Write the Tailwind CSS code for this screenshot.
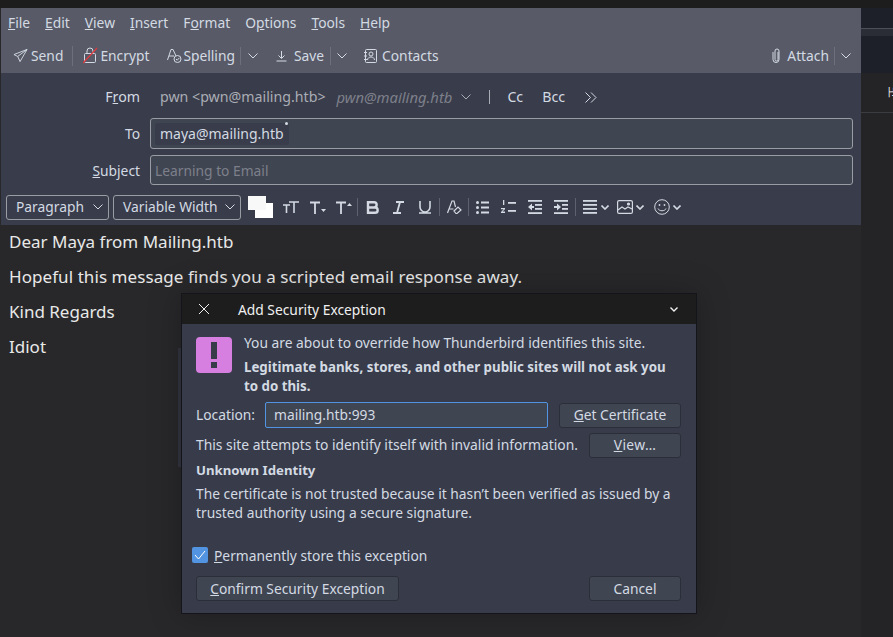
<!DOCTYPE html>
<html lang="en">
<head>
    <meta charset="UTF-8">
    <title>Write: Learning to Email</title>
    <script src="https://cdn.jsdelivr.net/npm/@tailwindcss/browser@4"></script>
</head>
<body class="w-[893px] h-[637px] overflow-hidden bg-[#28282b] font-['Noto_Sans',sans-serif] text-[13.8px] text-[#d3dae3]">
<div class="relative w-[893px] h-[637px] flex flex-col">
    <div class="h-[8px] bg-[#1d1d1d] w-full shrink-0"></div>
    <div class="flex flex-1 min-h-0">
        <!-- compose window -->
        <div class="w-[861px] pl-[1px] flex flex-col">
            <!-- menu -->
            <div class="h-[32px] bg-[#585b67] flex items-center pl-[7px] gap-[15px] text-[#d3dae3] pb-[2px]">
                <span><u>F</u>ile</span><span><u>E</u>dit</span><span><u>V</u>iew</span><span><u>I</u>nsert</span><span>F<u>o</u>rmat</span><span>O<u>p</u>tions</span><span><u>T</u>ools</span><span><u>H</u>elp</span>
            </div>
            <!-- toolbar -->
            <div class="h-[33px] bg-[#585b67] flex items-center pl-[12px] pr-[10px]">
                <svg class="w-[15px] h-[15px] mb-[2px]" viewBox="0 0 16 16" fill="none" stroke="#d3dae3" stroke-width="1"><path d="M15 1.500 1 7l4 2 2.500 5.500L15 1.500ZM5 9l10-7.500"/></svg>
                <span class="ml-[3px]">Send</span>
                <span class="w-px h-[20px] bg-[#6d707b] ml-[9px] mb-[2px]"></span>
                <svg class="w-[15px] h-[17px] ml-[10px] mb-[2px]" viewBox="0 0 15 17" fill="none" stroke="#d3dae3"><rect x="1.500" y="6.500" width="11" height="9" rx="1"/><path d="M4 6.500V4a3 3 0 0 1 6 0v2"/><path d="M0 16 14 1" stroke="#e0393e" stroke-width="1.200"/></svg>
                <span class="ml-[2px]">Encrypt</span>
                <svg class="w-[15px] h-[15px] ml-[18px] mb-[2px]" viewBox="0 0 15 15" fill="none" stroke="#d3dae3"><path d="M.5 12 4 1.500h2L9 8M2 8h5"/><circle cx="10.500" cy="11" r="3.500"/><path d="m9 11 1.200 1.200L12.500 9.800"/></svg>
                <span class="ml-[1px]">Spelling</span>
                <span class="w-px h-[18px] bg-[#6d707b] ml-[5px] mb-[2px]"></span>
                <svg class="w-[10px] h-[6px] ml-[7px] mb-[2px]" viewBox="0 0 10 6" fill="none" stroke="#d3dae3"><path d="m.5.500 4.500 4.500L9.500.500"/></svg>
                <svg class="w-[11px] h-[12px] ml-[18px] mb-[2px]" viewBox="0 0 11 12" fill="none" stroke="#d3dae3"><path d="M5.500 1v7M2.500 5.500l3 3 3-3M.5 11h10"/></svg>
                <span class="ml-[7px]">Save</span>
                <span class="w-px h-[18px] bg-[#6d707b] ml-[6px] mb-[2px]"></span>
                <svg class="w-[10px] h-[6px] ml-[6px] mb-[2px]" viewBox="0 0 10 6" fill="none" stroke="#d3dae3"><path d="m.5.500 4.500 4.500L9.500.500"/></svg>
                <svg class="w-[13px] h-[14px] ml-[17px] mb-[2px]" viewBox="0 0 13 14" fill="none" stroke="#d3dae3"><rect x="1.500" y=".5" width="11" height="13" rx="1"/><circle cx="7" cy="5" r="2"/><path d="M3.500 11c0-4 7-4 7 0M0 3.500h3M0 7h3M0 10.500h3"/></svg>
                <span class="ml-[5px]">Contacts</span>
                <svg class="w-[9px] h-[15px] ml-auto mb-[2px]" viewBox="0 0 9 15" fill="none" stroke="#d3dae3"><path d="M6 4v7.500a1.500 1.500 0 0 1-3 0V3a2 2 0 0 1 4 0v8.500a3 3 0 0 1-6 0V4"/></svg>
                <span class="ml-[6px]">Attach</span>
                <span class="w-px h-[18px] bg-[#6d707b] ml-[5px] mb-[2px]"></span>
                <svg class="w-[10px] h-[6px] ml-[6px] mb-[2px]" viewBox="0 0 10 6" fill="none" stroke="#d3dae3"><path d="m.5.500 4.500 4.500L9.500.500"/></svg>
            </div>
            <!-- header fields -->
            <div class="h-[152px] bg-[#393c4a] flex flex-col">
                <div class="h-[45px] flex items-center pt-[3px] text-[14.2px]">
                    <span class="w-[139px] text-right">F<u>r</u>om</span>
                    <span class="ml-[20px] text-[#a9adb5]">pwn &lt;pwn@mailing.htb&gt;</span>
                    <span class="ml-[11px] italic text-[#7d808a] text-[14.8px]">pwn@mailing.htb</span>
                    <svg class="w-[10px] h-[6px] ml-[9px]" viewBox="0 0 10 6" fill="none" stroke="#a9adb5"><path d="m.5.500 4.500 4.500L9.500.500"/></svg>
                    <span class="w-px h-[14px] bg-[#a9adb5] ml-[18px]"></span>
                    <span class="ml-[17px]">Cc</span>
                    <span class="ml-[19px]">Bcc</span>
                    <svg class="w-[12px] h-[11px] ml-[20px]" viewBox="0 0 12 11" fill="none" stroke="#d3dae3"><path d="m.5.500 5 5-5 5M6 .5l5 5-5 5"/></svg>
                </div>
                <div class="flex items-center h-[31px]">
                    <span class="w-[139px] text-right pt-[1px]">To</span>
                    <div class="ml-[10px] w-[703px] h-[31px] border border-[#9a9ca3] rounded-[3px] bg-[#404552] flex items-center pl-[4px] text-[14px]">
                        <span class="relative h-[22px] leading-[21px] px-[5px] rounded-[3px] bg-[#393c4a]">maya@mailing.htb<span class="absolute right-[1px] top-[-1px] w-[3px] h-[3px] rounded-full bg-[#d3dae3]"></span></span>
                    </div>
                </div>
                <div class="flex items-center h-[30px] mt-[6px]">
                    <span class="w-[139px] text-right pt-[2px]"><u>S</u>ubject</span>
                    <div class="ml-[10px] w-[703px] h-[30px] border border-[#9a9ca3] rounded-[3px] bg-[#404552] flex items-center pl-[4px] pt-[2px] text-[#7d808a]">Learning to Email</div>
                </div>
                <!-- format bar -->
                <div class="flex items-center h-[26px] mt-[9px] pl-[5px]">
                    <div class="w-[103px] h-[25px] border border-[#9a9ca3] rounded-[3px] flex items-center pl-[9px]">Paragraph<svg class="w-[10px] h-[6px] ml-auto mr-[5px]" viewBox="0 0 10 6" fill="none" stroke="#d3dae3"><path d="m.5.500 4.500 4.500L9.500.500"/></svg></div>
                    <div class="w-[128px] h-[25px] border border-[#9a9ca3] rounded-[3px] flex items-center pl-[9px] ml-[4px]">Variable Width<svg class="w-[10px] h-[6px] ml-auto mr-[5px]" viewBox="0 0 10 6" fill="none" stroke="#d3dae3"><path d="m.5.500 4.500 4.500L9.500.500"/></svg></div>
                    <div class="relative w-[25px] h-[22px] ml-[7px]">
                        <div class="absolute left-[7px] top-[7px] w-[18px] h-[15px] bg-white"></div>
                        <div class="absolute left-0 top-0 w-[18px] h-[14px] bg-[#f8f8f8]"></div>
                    </div>
                    <svg class="w-[16px] h-[14px] ml-[10px]" viewBox="0 0 16 14" fill="none" stroke="#d3dae3" stroke-width="1.600"><path d="M0 5h7M3.500 5v8M6 2h10M11 2v11"/></svg>
                    <svg class="w-[16px] h-[13px] ml-[11px]" viewBox="0 0 16 13" fill="none" stroke="#d3dae3" stroke-width="1.800"><path d="M0 1.500h10M5 1.500V13"/><path d="M11 8h5l-2.500 3Z" fill="#d3dae3" stroke="none"/></svg>
                    <svg class="w-[16px] h-[13px] ml-[10px]" viewBox="0 0 16 13" fill="none" stroke="#d3dae3" stroke-width="1.800"><path d="M0 1.500h10M5 1.500V13"/><path d="M11 5h5l-2.500-3Z" fill="#d3dae3" stroke="none"/></svg>
                    <span class="w-px h-[18px] bg-[#5f626e] ml-[5px]"></span>
                    <svg class="w-[13px] h-[13px] ml-[8px]" viewBox="0 0 13 13" fill="none" stroke="#d3dae3" stroke-width="2.400"><path d="M2 1.200h6a2.600 2.600 0 0 1 0 5.300H2h7a2.600 2.600 0 0 1 0 5.300H2Z"/></svg>
                    <svg class="w-[11px] h-[13px] ml-[14px]" viewBox="0 0 11 13" fill="none" stroke="#d3dae3" stroke-width="1.800"><path d="M3 1h8M0 12h8M7 1 4 12"/></svg>
                    <svg class="w-[12px] h-[13px] ml-[15px]" viewBox="0 0 12 13" fill="none" stroke="#d3dae3" stroke-width="1.600"><path d="M1 0v6a5 5 0 0 0 10 0V0M0 12h12"/></svg>
                    <span class="w-px h-[18px] bg-[#5f626e] ml-[8px]"></span>
                    <svg class="w-[15px] h-[15px] ml-[7px]" viewBox="0 0 15 15" fill="none" stroke="#d3dae3" stroke-width="1.200"><path d="M.5 13 5 1h2l1.500 6M2.500 9h4"/><path d="m7 11 4-4 3 3-4 3.500H9Z"/></svg>
                    <span class="w-px h-[18px] bg-[#5f626e] ml-[6px]"></span>
                    <svg class="w-[13px] h-[13px] ml-[7px]" viewBox="0 0 13 13" fill="#d3dae3"><circle cx="1.500" cy="1.500" r="1.500"/><circle cx="1.500" cy="6.500" r="1.500"/><circle cx="1.500" cy="11.500" r="1.500"/><rect x="5" y="0.500" width="8" height="2"/><rect x="5" y="5.500" width="8" height="2"/><rect x="5" y="10.500" width="8" height="2"/></svg>
                    <svg class="w-[15px] h-[14px] ml-[12px]" viewBox="0 0 15 14" fill="#d3dae3"><rect x="7" y="2" width="8" height="1.800"/><rect x="7" y="10" width="8" height="1.800"/><rect x="2" y="0" width="1.300" height="5"/><path d="M0 8h4v1.200l-2.500 2.300H4V13H0v-1l2.600-2.700H0Z"/></svg>
                    <svg class="w-[14px] h-[14px] ml-[12px]" viewBox="0 0 14 14" fill="#d3dae3"><rect width="14" height="1.800"/><rect y="12.200" width="14" height="1.800"/><rect x="7" y="4" width="7" height="1.800"/><rect x="7" y="8" width="7" height="1.800"/><path d="M0 7l4-3.500v2.500h2v2H4v2.500Z"/></svg>
                    <svg class="w-[14px] h-[14px] ml-[12px]" viewBox="0 0 14 14" fill="#d3dae3"><rect width="14" height="1.800"/><rect y="12.200" width="14" height="1.800"/><rect x="8" y="4" width="6" height="1.800"/><rect x="8" y="8" width="6" height="1.800"/><path d="M7 7 3 3.500V6H0v2h3v2.500Z"/></svg>
                    <span class="w-px h-[18px] bg-[#5f626e] ml-[7px]"></span>
                    <svg class="w-[14px] h-[14px] ml-[7px]" viewBox="0 0 14 14" fill="#d3dae3"><rect width="14" height="1.800"/><rect y="4" width="14" height="1.800"/><rect y="8" width="14" height="1.800"/><rect y="12" width="14" height="1.800"/></svg>
                    <svg class="w-[8px] h-[5px] ml-[4px]" viewBox="0 0 8 5" fill="none" stroke="#d3dae3" stroke-width="1.600"><path d="m.5.500 3.500 3.500L7.500.500"/></svg>
                    <svg class="w-[16px] h-[14px] ml-[8px]" viewBox="0 0 16 14" fill="none" stroke="#d3dae3" stroke-width="1.200"><rect x=".6" y=".6" width="14.800" height="12.800" rx="1.500"/><path d="m1 10 4-3 3 2 3-2 4 2"/><circle cx="11.500" cy="4" r="1" fill="#d3dae3"/></svg>
                    <svg class="w-[8px] h-[5px] ml-[3px]" viewBox="0 0 8 5" fill="none" stroke="#d3dae3" stroke-width="1.600"><path d="m.5.500 3.500 3.500L7.500.500"/></svg>
                    <svg class="w-[16px] h-[16px] ml-[10px]" viewBox="0 0 16 16" fill="none" stroke="#d3dae3"><circle cx="8" cy="8" r="7.300"/><circle cx="5.500" cy="6" r=".9" fill="#d3dae3" stroke="none"/><circle cx="10.500" cy="6" r=".9" fill="#d3dae3" stroke="none"/><path d="M4 9.500c1 3 7 3 8 0"/></svg>
                    <svg class="w-[8px] h-[5px] ml-[3px]" viewBox="0 0 8 5" fill="none" stroke="#d3dae3" stroke-width="1.600"><path d="m.5.500 3.500 3.500L7.500.500"/></svg>
                </div>
            </div>
            <!-- message body -->
            <div class="flex-1 bg-[#28282b] pl-[8px] pt-[5px] text-[17px] text-[#e8e8e8] leading-[24px] flex flex-col gap-[11px]">
                <p>Dear Maya from Mailing.htb</p>
                <p class="tracking-[0.07px]">Hopeful this message finds you a scripted email response away.</p>
                <p>Kind Regards</p>
                <p>Idiot</p>
            </div>
        </div>
        <!-- window behind -->
        <div class="flex-1 bg-[#1e2029] flex flex-col">
            <div class="h-[20px]"></div>
            <div class="h-px bg-[#4c4e58]"></div>
            <div class="h-[7px] bg-[#2a2c36]"></div>
            <div class="h-[37px] bg-[#1e2029]"></div>
            <div class="flex-1 bg-[#242426] relative">
                <span class="absolute left-[27px] top-[13px] text-[12px] leading-none text-white [writing-mode:sideways-lr]">正</span>
                <div class="h-px bg-[#3b3c40] mt-[39px]"></div>
            </div>
        </div>
    </div>

    <!-- strip of the window behind the dialog -->
    <div class="absolute left-[178px] top-[348px] w-[3px] h-[119px] bg-[#33353f]"></div>

    <!-- security exception dialog -->
    <div class="absolute left-[181px] top-[293px] w-[516px] h-[321px] bg-[#383c4a] border border-[#14151a] shadow-[0_0_30px_rgba(0,0,0,0.25)] flex flex-col whitespace-nowrap">
        <div class="h-[30px] bg-[#1d1d1d] flex items-center pl-[16px] pr-[18px] text-[#f0f0f0] shrink-0">
            <svg class="w-[12px] h-[12px]" viewBox="0 0 12 12" fill="none" stroke="#f0f0f0"><path d="m1 1 10 10M11 1 1 11"/></svg>
            <span class="ml-[28px] pt-[2px]">Add Security Exception</span>
            <svg class="w-[8px] h-[5px] ml-auto" viewBox="0 0 8 5" fill="none" stroke="#f0f0f0" stroke-width="1.400"><path d="m.5.500 3.500 3.500L7.500.500"/></svg>
        </div>
        <div class="flex-1 relative pl-[14px] pr-[15px]">
            <div class="flex pt-[9px]">
                <div class="w-[36px] h-[36px] mt-[4px] rounded-[4px] bg-[#d67fe0] flex items-center justify-center shrink-0">
                    <svg class="w-[6px] h-[26px]" viewBox="0 0 6 26" fill="#383c4a"><rect width="6" height="17"/><rect y="20" width="6" height="6"/></svg>
                </div>
                <div class="ml-[12px] leading-[20px]">
                    <p>You are about to override how Thunderbird identifies this site.</p>
                    <p class="font-bold text-[13.3px] mt-[5px] leading-[19px]">Legitimate banks, stores, and other public sites will not ask you<br>to do this.</p>
                </div>
            </div>
            <div class="flex items-center mt-[6px] h-[26px]">
                <span class="w-[69px]">Location:</span>
                <div class="w-[283px] h-[26px] border border-[#5294e2] rounded-[2px] bg-[#404552] flex items-center pl-[8px]">mailing.htb:993</div>
                <button class="ml-[11px] w-[122px] h-[25px] border border-[#2b2e39] rounded-[3px] bg-[#404552] text-center"><u>G</u>et Certificate</button>
            </div>
            <div class="flex items-center mt-[5px] h-[25px]">
                <span class="text-[13.85px]">This site attempts to identify itself with invalid information.</span>
                <button class="ml-auto w-[92px] h-[25px] border border-[#2b2e39] rounded-[3px] bg-[#404552] text-center tracking-[0.4px]"><u>V</u>iew…</button>
            </div>
            <p class="font-bold text-[13.2px] mt-[2px] leading-[20px]">Unknown Identity</p>
            <p class="mt-[4px] leading-[19px]">The certificate is not trusted because it hasn’t been verified as issued by a<br>trusted authority using a secure signature.</p>
            <div class="flex items-center mt-[24px] h-[18px] -ml-[4px]">
                <span class="w-[16px] h-[16px] rounded-[2px] bg-[#5294e2] flex items-center justify-center">
                    <svg class="w-[12px] h-[10px]" viewBox="0 0 12 10" fill="none" stroke="#fff"><path d="m1 5 3.500 4L11 1"/></svg>
                </span>
                <span class="ml-[6px] pt-[2px]"><u>P</u>ermanently store this exception</span>
            </div>
            <div class="flex items-center justify-between mt-[12px]">
                <button class="w-[203px] h-[25px] pt-[1px] border border-[#2b2e39] rounded-[3px] bg-[#404552] text-center"><u>C</u>onfirm Security Exception</button>
                <button class="w-[92px] h-[25px] pt-[1px] border border-[#2b2e39] rounded-[3px] bg-[#404552] text-center">Cancel</button>
            </div>
        </div>
    </div>
</div>
</body>
</html>
